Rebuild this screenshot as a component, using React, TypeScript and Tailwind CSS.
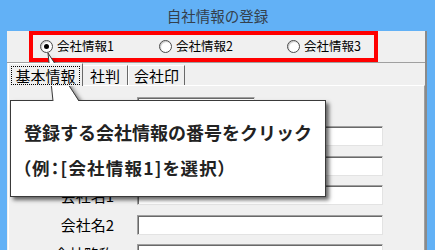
import React from "react";

const font = "font-['Noto_Sans_CJK_JP','Noto_Sans',sans-serif]";

function Radio({ checked, label, w }: { checked?: boolean; label: string; w: string }) {
  return (
    <div className={`flex items-center ${w}`}>
      <div className="w-[13px] h-[13px] rounded-full border border-[#4a4a4a] bg-white shadow-[inset_1px_1px_1px_#c8c8c8] flex items-center justify-center">
        {checked && <div className="w-[5px] h-[5px] rounded-full bg-black" />}
      </div>
      <span className="ml-[4px] text-[12.5px] leading-none">{label}</span>
    </div>
  );
}

function Field({ label, short }: { label: string; short?: boolean }) {
  return (
    <div className="flex items-center h-[20px]">
      <div className="w-[105px] text-right text-[15px] leading-none">{label}</div>
      <div
        className={`ml-[23px] h-[20px] ${short ? "w-[118px]" : "w-[246px]"} bg-white border border-t-[#a0a0a0] border-l-[#a0a0a0] border-r-[#e3e3e3] border-b-[#e3e3e3] shadow-[inset_1px_1px_0_#696969]`}
      />
    </div>
  );
}

export default function App() {
  return (
    <div className={`relative w-[435px] h-[250px] overflow-hidden bg-[#62b1f6] text-black ${font}`}>
      <div className="h-[31px] flex items-center justify-center text-[14.5px] text-[#34404c]">
        自社情報の登録
      </div>
      <div className="ml-[7px] mr-[8px] h-[219px] bg-[#f0f0f0] flex flex-col border-r-2 border-r-[#8a8a8a]">
        {/* radio group */}
        <div className="h-[32px] border-b border-[#a0a0a0] flex">
          <div className="ml-[22px] w-[349px] h-[31px] border-4 border-[#ff0000] flex items-center pl-[7px]">
            <Radio checked label="会社情報1" w="w-[119px]" />
            <Radio label="会社情報2" w="w-[128px]" />
            <Radio label="会社情報3" w="w-[80px]" />
          </div>
        </div>
        {/* tabs */}
        <div className="h-[23px] flex items-end pl-[1px] text-[15px] leading-none relative z-10">
          <div className="h-[23px] w-[75px] bg-[#f0f0f0] border-l border-t border-white border-r border-r-[#696969] px-[2px] pt-[2px] -mb-[1px]">
            <div className="h-[19px] border border-dotted border-black flex items-center justify-center">
              基本情報
            </div>
          </div>
          <div className="h-[20px] w-[45px] border-t border-white border-r border-r-[#696969] flex items-center justify-center">
            社判
          </div>
          <div className="h-[20px] w-[57px] border-l border-t border-white border-r border-r-[#696969] flex items-center justify-center">
            会社印
          </div>
        </div>
        {/* content */}
        <div className="flex-1 ml-[1px] border-t border-l border-white border-r border-r-[#a0a0a0] pt-[11px] flex flex-col gap-[9.4px]">
          <Field label="会社番号" short />
          <Field label="郵便番号" />
          <Field label="住所" />
          <Field label="会社名1" />
          <Field label="会社名2" />
          <Field label="会社略称" />
        </div>
      </div>

      {/* pointer shadow */}
      <svg className="absolute left-0 top-0 pointer-events-none" width="435" height="250">
        <defs>
          <filter id="blur" x="-50%" y="-50%" width="200%" height="200%">
            <feGaussianBlur stdDeviation="2" />
          </filter>
        </defs>
        <polygon points="51,57 56,104 83,104" fill="rgba(0,0,0,0.55)" filter="url(#blur)" />
      </svg>

      {/* callout */}
      <div className="absolute left-[10px] top-[100px] w-[316px] h-[97px] bg-white border border-[#3a3a3a] shadow-[3px_3px_4px_rgba(0,0,0,0.6)] pl-[13px] pt-[20px] text-[#222]">
        <div className="text-[18px] font-bold leading-[22px]">登録する会社情報の番号をクリック</div>
        <div className="mt-[14px] text-[17.5px] font-bold leading-[22px] [font-feature-settings:'palt'] tracking-[1.2px] -ml-[2px]">
          （例：[会社情報1]を選択）
        </div>
      </div>

      {/* pointer */}
      <svg className="absolute left-0 top-0 pointer-events-none" width="435" height="250">
        <polygon points="48,53 53,101.5 79,101.5" fill="#ffffff" />
        <polyline points="53,101 48,53 79,101" fill="none" stroke="#3a3a3a" strokeWidth="1" />
      </svg>
    </div>
  );
}
